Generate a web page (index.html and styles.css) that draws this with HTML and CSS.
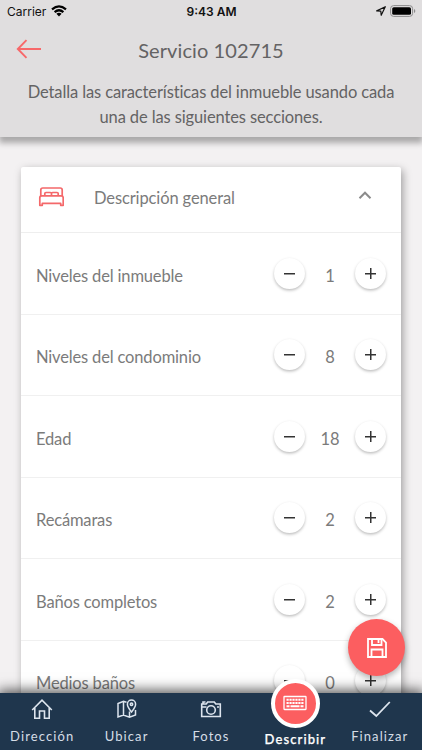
FILE: index.html
```html
<!DOCTYPE html>
<html lang="es">
<head>
<meta charset="utf-8">
<title>Servicio 102715</title>
<link rel="stylesheet" href="styles.css">
</head>
<body>
<div class="app">
  <header class="header">
    <div class="status">
      <div class="status-left"><span>Carrier</span>
        <svg width="16" height="12" viewBox="0 0 16 12"><g fill="none" stroke="#000" stroke-width="2.2"><path d="M1 4.4Q8-1.6 15 4.4"/><path d="M3.6 7.1Q8 3.4 12.4 7.1"/></g><path d="M5.4 8.8Q8 6.9 10.6 8.8L8 11.5Z"/></svg>
      </div>
      <strong class="clock">9:43 AM</strong>
      <div class="status-right">
        <svg width="10" height="10" viewBox="0 0 10 10"><path d="M.7 4.9 9.300.7 5.200 9.300 4.800 5.200Z" fill="none" stroke="#111" stroke-width="1.2" stroke-linejoin="round"/></svg>
        <svg width="26" height="12" viewBox="0 0 26 12"><rect x=".6" y=".6" width="22" height="10.8" rx="3" fill="none" stroke="#8c8b8c" stroke-width="1"/><rect x="2.2" y="2.2" width="18.8" height="7.6" rx="1.6"/><path d="M24 4v4q1.300-.6 1.300-2T24 4" fill="#8c8b8c"/></svg>
      </div>
    </div>
    <div class="titlebar">
      <svg class="back" width="26" height="20" viewBox="0 0 26 20"><path d="M10.500 1.200 1.800 10 10.500 18.800M1.800 10H25" fill="none" stroke="#f7686a" stroke-width="1.900"/></svg>
      <h1>Servicio 102715</h1>
    </div>
    <p class="intro">Detalla las características del inmueble usando cada<br>una de las siguientes secciones.</p>
  </header>
  <main class="content">
    <section class="card">
      <div class="card-head">
        <svg width="26" height="20" viewBox="0 0 26 20"><g fill="none" stroke="#f4686a" stroke-width="1.700" stroke-linejoin="round"><path d="M2.800 9V3Q2.800 1 4.800 1H22.200Q24.200 1 24.200 3V9"/><path d="M1.800 18.300V10.800Q1.800 8.800 3.800 8.800H23.200Q25.200 8.800 25.200 10.800V18.300H22.700V16.300H4.300V18.300Z"/><path d="M6.800 8.500V6.600Q6.800 5.500 8 5.500H12.300Q13.500 5.500 13.500 6.600V8.500M13.500 6.600Q13.500 5.500 14.700 5.500H19Q20.200 5.500 20.200 6.600V8.500"/></g></svg>
        <h2>Descripción general</h2>
        <svg class="chevron" width="14" height="9" viewBox="0 0 14 9"><path d="M1.500 7.200 7 1.700l5.500 5.500" fill="none" stroke="#8b8b8b" stroke-width="2"/></svg>
      </div>
      <div class="row"><span class="label">Niveles del inmueble</span><button class="step minus"></button><span class="value">1</span><button class="step plus"></button></div>
      <div class="row"><span class="label">Niveles del condominio</span><button class="step minus"></button><span class="value">8</span><button class="step plus"></button></div>
      <div class="row"><span class="label">Edad</span><button class="step minus"></button><span class="value">18</span><button class="step plus"></button></div>
      <div class="row"><span class="label">Recámaras</span><button class="step minus"></button><span class="value">2</span><button class="step plus"></button></div>
      <div class="row"><span class="label">Baños completos</span><button class="step minus"></button><span class="value">2</span><button class="step plus"></button></div>
      <div class="row"><span class="label">Medios baños</span><button class="step minus"></button><span class="value">0</span><button class="step plus"></button></div>
    </section>
  </main>
  <nav class="nav">
    <a class="tab"><svg width="22" height="22" viewBox="0 0 22 22"><path d="M1.200 12 11 2.200l9.800 9.800M3.800 10V20.300H8.500V13H13.500V20.300H18.200V10" fill="none" stroke="#dde5ee" stroke-width="1.600"/></svg><span>Dirección</span></a>
    <a class="tab"><svg width="22" height="22" viewBox="0 0 22 22"><g fill="none" stroke="#dde5ee" stroke-width="1.500"><path d="M10.500 4.200 7.500 3.300 2 5.500V19L7.500 17 13.500 19.200 19.500 17V12M7.500 3.300V17M13.500 13.500V19.200"/><path d="M15.500 14Q11.400 9 11.400 6.200A4.100 4.100 0 0 1 19.600 6.200Q19.600 9 15.500 14Z"/><circle cx="15.500" cy="6.300" r="1.200"/></g></svg><span>Ubicar</span></a>
    <a class="tab"><svg width="22" height="22" viewBox="0 0 22 22"><g fill="none" stroke="#dde5ee" stroke-width="1.600"><path d="M1.700 18.500V6H6.200L7.700 4H14.300L15.800 6H20.300V18.500ZM1.700 9H6.500M3 5.500V4H5.500"/><circle cx="11" cy="12" r="4.300"/><path d="M17 9H19"/></g></svg><span>Fotos</span></a>
    <a class="tab active"><span class="bubble"><svg width="24" height="16" viewBox="0 0 24 16"><rect x="1" y="1.500" width="22" height="13" rx=".5" fill="none" stroke="#fff" stroke-width="1.300"/><path d="M3.500 4.800H20.500M3.500 8H20.500" stroke="#fff" stroke-width="2" stroke-dasharray="2.200 .76"/><path d="M3.500 11.300H6.500M7.500 11.300H16.500M17.500 11.300H20.500" stroke="#fff" stroke-width="2"/></svg></span><span>Describir</span></a>
    <a class="tab"><svg width="22" height="22" viewBox="0 0 22 22"><path d="M1 12.500 7.300 18 20.800 4" fill="none" stroke="#dde5ee" stroke-width="1.800"/></svg><span>Finalizar</span></a>
  </nav>
  <button class="fab">
    <svg width="20" height="20" viewBox="0 0 20 20"><g fill="none" stroke="#fff" stroke-width="1.800"><path d="M1 1H15.500L19 4.500V19H1Z"/><path d="M5 1V7H14.500V1M11.500 2V5M4.500 19V11.500H15.500V19"/></g></svg>
  </button>
</div>
</body>
</html>
```
FILE: styles.css
```css
* { box-sizing: border-box; }
body { margin: 0; font-family: Lato, sans-serif; color: #7b7b7b; }
h1, h2, p { margin: 0; font-weight: 400; }
button { border: 0; padding: 0; }
svg { display: block; flex: none; }
.app { position: relative; width: 422px; height: 750px; overflow: hidden; background: #f3f1f2; display: flex; flex-direction: column; }
.header { position: relative; flex: none; height: 137px; background: #e0dedf; box-shadow: 0 5px 6px 1px rgba(0,0,0,.3); color: #646364; }
.status { display: grid; grid-template-columns: 1fr auto 1fr; align-items: center; height: 22px; padding: 0 6px 0 7px; font-family: Inter, sans-serif; font-size: 12px; color: #111; }
.status-left { display: flex; align-items: center; gap: 5px; letter-spacing: 0; }
.clock { font-weight: 600; letter-spacing: 0; }
.status-right { display: flex; align-items: center; justify-content: flex-end; gap: 4px; }
.titlebar { display: grid; grid-template-columns: 26px 1fr 26px; align-items: center; height: 54px; padding: 0 16px; }
h1 { text-align: center; font-size: 20px; line-height: 24px; letter-spacing: .1px; padding-top: 1px; }
.intro { padding-top: 4px; text-align: center; font-size: 16.500px; line-height: 25px; letter-spacing: -.12px; }
.content { padding: 30px 21px 0; flex: 1; }
.card { background: #fff; border-radius: 2px; height: 620px; box-shadow: 2px 3px 9px rgba(0,0,0,.35); }
.card-head { height: 66px; display: grid; grid-template-columns: 26px 1fr 14px; column-gap: 30px; align-items: center; padding: 0 29px 6px 17px; border-bottom: 1px solid #eee; }
h2 { font-size: 16.500px; line-height: 20px; padding-top: 3px; letter-spacing: -.12px; }
.chevron { margin-top: -2px; }
.row { height: 81.500px; display: grid; grid-template-columns: 1fr 31px 50px 31px; align-items: center; padding: 0 15px; border-bottom: 1px solid #f0f0f0; font-size: 16.500px; }
.label, .value { line-height: 20px; padding-top: 5px; }
.label { letter-spacing: -.16px; }
.value { text-align: center; }
.step { width: 31px; height: 31px; border-radius: 50%; background: linear-gradient(#333,#333) center/11px 1.500px no-repeat, #fff; box-shadow: 0 1.500px 3px rgba(0,0,0,.26); }
.plus { background: linear-gradient(#333,#333) center/11px 1.500px no-repeat, linear-gradient(#333,#333) center/1.500px 11px no-repeat, #fff; }
.fab { position: absolute; left: 348px; top: 619px; width: 57px; height: 57px; border-radius: 50%; background: #fc5e60; display: grid; place-items: center; box-shadow: 0 3px 6px rgba(0,0,0,.3); }
.nav { position: absolute; left: 0; right: 0; bottom: 0; height: 57.500px; display: grid; grid-template-columns: repeat(5, 1fr); background: #1f364d; box-shadow: 0 -1px 12px 2px rgba(0,0,0,.65); }
.tab { display: flex; flex-direction: column; align-items: center; padding-top: 5px; color: #d5dde6; font-size: 13px; line-height: 16px; letter-spacing: 1.100px; gap: 8.500px; white-space: nowrap; }
.active { padding-top: 0; gap: 3px; color: #fff; font-weight: 500; -webkit-text-stroke: .25px #fff; }
.bubble { flex: none; width: 49px; height: 49px; margin-top: -14px; border: 4px solid #fff; border-radius: 50%; background: #fc5e60; display: grid; place-items: center; }
```
